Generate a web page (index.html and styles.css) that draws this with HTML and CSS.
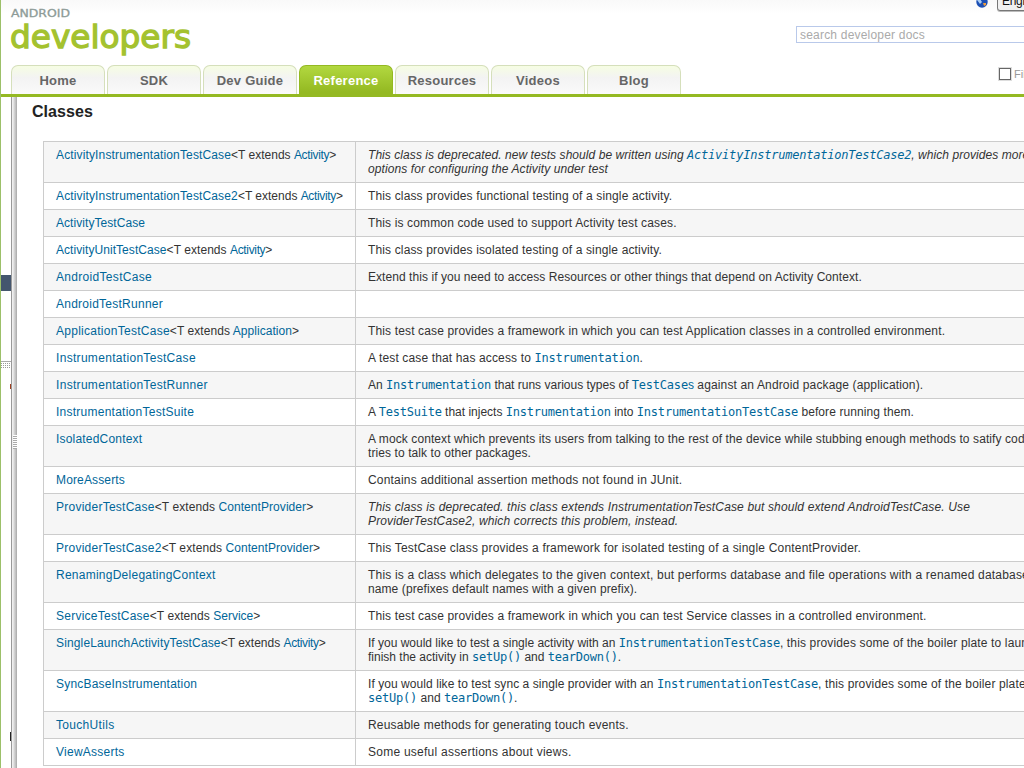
FILE: index.html
```html
<!DOCTYPE html>
<html lang="en">
<head>
<meta charset="utf-8">
<title>android.test | Android Developers</title>
<link rel="stylesheet" href="styles.css">
</head>
<body>
<div class="page">
<header class="header">
  <div class="brand">
    <svg class="logo" width="184" height="48" viewBox="0 0 184 48" role="img">
      <text class="logo-small" x="0" y="10" textLength="59" lengthAdjust="spacingAndGlyphs">ANDROID</text>
      <text class="logo-big" x="-1" y="41" textLength="181" lengthAdjust="spacingAndGlyphs">developers</text>
    </svg>
    <nav class="tabs">
      <a class="tab">Home</a><a class="tab">SDK</a><a class="tab">Dev Guide</a><a class="tab active">Reference</a><a class="tab">Resources</a><a class="tab">Videos</a><a class="tab">Blog</a>
    </nav>
  </div>
  <div class="tools">
    <div class="lang">
      <svg width="12" height="12" viewBox="0 0 12 12"><circle cx="6" cy="6" r="5.7" fill="#1c4fb4"/><path d="M1 4l3-1 2 3-2 2z" fill="#a9cdf4"/><path d="M7 7l3 0 0 2-2 1z" fill="#eb9b3c"/></svg>
      <span class="select">English</span>
    </div>
    <div class="search">search developer docs</div>
    <div class="filter"><span class="box"></span><span>Filter by API Level</span></div>
  </div>
</header>
<div class="body">
  <aside class="side">
    <div class="side-top"><div class="selected"></div></div>
    <div class="side-grip"></div>
    <div class="side-bottom"><i class="mark"></i><i class="mark dark"></i></div>
  </aside>
  <div class="splitter"><div class="grip"></div></div>
  <main class="content">
    <h2>Classes</h2>
    <table class="classes">
      <tr><td><a class="k3">ActivityInstrumentationTestCase</a><span class="k0">&lt;T extends </span><span class="tight"><a>Activity</a>&gt;</span></td><td><em><span class="k1">This class is deprecated. new tests should be written using </span><code>ActivityInstrumentationTestCase2</code><span class="k1">, which provides more</span><br>options for configuring the Activity under test</em></td></tr>
      <tr><td><a class="k3">ActivityInstrumentationTestCase2</a><span class="k0">&lt;T extends </span><span class="tight"><a>Activity</a>&gt;</span></td><td class="k3">This class provides functional testing of a single activity.</td></tr>
      <tr><td><a class="k1">ActivityTestCase</a></td><td class="k3">This is common code used to support Activity test cases.</td></tr>
      <tr><td><a class="k1">ActivityUnitTestCase</a><span class="k1">&lt;T extends </span><span class="tight"><a>Activity</a>&gt;</span></td><td class="k3">This class provides isolated testing of a single activity.</td></tr>
      <tr><td><a class="k6">AndroidTestCase</a></td><td class="k1">Extend this if you need to access Resources or other things that depend on Activity Context.</td></tr>
      <tr><td><a>AndroidTestRunner</a></td><td></td></tr>
      <tr><td><a class="k5">ApplicationTestCase</a><span class="k1">&lt;T extends </span><span class="k1"><a>Application</a>&gt;</span></td><td class="k3">This test case provides a framework in which you can test Application classes in a controlled environment.</td></tr>
      <tr><td><a class="k6">InstrumentationTestCase</a></td><td class="k3">A test case that has access to <code>Instrumentation</code>.</td></tr>
      <tr><td><a class="k6">InstrumentationTestRunner</a></td><td class="k0">An <code>Instrumentation</code> that runs various types of <code>TestCase</code><a>s</a><span class="k3"> against an Android package (application).</span></td></tr>
      <tr><td><a>InstrumentationTestSuite</a></td><td class="k0">A <code>TestSuite</code> that injects <code>Instrumentation</code> into <code>InstrumentationTestCase</code><span class="k2"> before running them.</span></td></tr>
      <tr><td><a class="k4">IsolatedContext</a></td><td class="k2">A mock context which prevents its users from talking to the rest of the device while stubbing enough methods to satify code that<br>tries to talk to other packages.</td></tr>
      <tr><td><a class="k3">MoreAsserts</a></td><td class="k4">Contains additional assertion methods not found in JUnit.</td></tr>
      <tr><td><a>ProviderTestCase</a><span class="k2">&lt;T extends </span><span class="k1"><a>ContentProvider</a>&gt;</span></td><td><em class="k3">This class is deprecated. this class extends InstrumentationTestCase but should extend AndroidTestCase. Use<br>ProviderTestCase2, which corrects this problem, instead.</em></td></tr>
      <tr><td><a>ProviderTestCase2</a><span class="k2">&lt;T extends </span><span class="k1"><a>ContentProvider</a>&gt;</span></td><td class="k4">This TestCase class provides a framework for isolated testing of a single ContentProvider.</td></tr>
      <tr><td><a>RenamingDelegatingContext</a></td><td class="k4">This is a class which delegates to the given context, but performs database and file operations with a renamed database/file<br><span class="k2">name (prefixes default names with a given prefix).</span></td></tr>
      <tr><td><a>ServiceTestCase</a><span class="k1">&lt;T extends </span><span class="k0"><a>Service</a>&gt;</span></td><td class="k3">This test case provides a framework in which you can test Service classes in a controlled environment.</td></tr>
      <tr><td><a class="k3">SingleLaunchActivityTestCase</a><span class="k0">&lt;T extends </span><span class="tight"><a>Activity</a>&gt;</span></td><td class="k0">If you would like to test a single activity with an <code>InstrumentationTestCase</code><span class="k3">, this provides some of the boiler plate to launch and</span><br>finish the activity in <code>setUp()</code> and <code>tearDown()</code>.</td></tr>
      <tr><td><a class="k4">SyncBaseInstrumentation</a></td><td class="k1">If you would like to test sync a single provider with an <code>InstrumentationTestCase</code><span class="k3">, this provides some of the boiler plate in</span><br><code>setUp()</code> and <code>tearDown()</code>.</td></tr>
      <tr><td><a class="k6">TouchUtils</a></td><td class="k4">Reusable methods for generating touch events.</td></tr>
      <tr><td><a>ViewAsserts</a></td><td>Some useful assertions about views.</td></tr>
    </table>
  </main>
</div>
</div>
</body>
</html>
```
FILE: styles.css
```css
* { box-sizing: border-box; }
body { margin: 0; background: #fff; color: #333; font: 12px/14px "Liberation Sans", Arial, sans-serif; }
.page { width: 1024px; height: 768px; overflow: hidden; border-left: 1px solid #9cc069; display: flex; flex-direction: column; }
.header { height: 97px; flex: none; display: flex; justify-content: space-between; border-bottom: 3px solid #94b922; background: linear-gradient(#f9f9f9, #fff 14px); }
.brand { display: flex; flex-direction: column; justify-content: space-between; padding: 7px 0 0 10px; }
.logo { overflow: visible; }
.logo-small { font: 11px "DejaVu Sans", sans-serif; fill: #8d9b97; stroke: #8d9b97; stroke-width: .3px; }
.logo-big { font: 32px "DejaVu Sans", sans-serif; fill: #a4c22f; stroke: #a4c22f; stroke-width: 1.3px; }
.tabs { display: flex; gap: 2px; }
.tab { width: 94px; height: 29px; border: 1px solid #d5dfbb; border-bottom: 0; border-radius: 7px 7px 0 0; background: linear-gradient(#f6fde3, #f3f3f3 12px, #fafafa); color: #666; font-weight: bold; font-size: 13px; line-height: 29px; letter-spacing: .25px; text-align: center; }
.tab.active { background: linear-gradient(#b2d840, #94b922 26px); border-color: #94b922; color: #fff; }
.tools { width: 228px; display: flex; flex-direction: column; overflow: hidden; white-space: nowrap; }
.lang { height: 26px; padding-left: 180px; display: flex; gap: 9px; align-items: flex-start; }
.lang svg { flex: none; margin-top: -4px; }
.select { flex: none; width: 80px; height: 19px; margin-top: -8px; padding: 0 4px; border: 1px solid #777; border-radius: 3px; background: #f1f1f1; box-shadow: 0 1px #bbb; color: #111; line-height: 17px; letter-spacing: -.3px; }
.search { height: 17px; width: 300px; border: 1px solid #b9c9ea; color: #aaa; padding-left: 3px; line-height: 16px; letter-spacing: .2px; }
.filter { display: flex; gap: 3px; align-items: center; margin: 24px 0 0 203px; color: #999; font-size: 11px; }
.box { flex: none; width: 12px; height: 12px; border: 1px solid #666; box-shadow: 0 0 0 1px #ddd; background: #fff; }
.body { display: flex; flex: 1; min-height: 0; }
.side { width: 10px; display: flex; flex-direction: column; }
.side-top { height: 265px; padding-top: 178px; border-bottom: 1px solid #aaa; }
.selected { height: 16px; background: #44566e; }
.side-grip { height: 5px; margin-top: 1px; background: repeating-linear-gradient(90deg, transparent 0 1px, #fff 1px 2px), repeating-linear-gradient(#999 0 1px, #fff 1px 2px); }
.side-bottom { display: flex; flex-direction: column; align-items: flex-end; padding-top: 16px; gap: 343px; }
.mark { width: 1px; height: 5px; background: #a04020; }
.dark { height: 9px; background: #222; }
.splitter { width: 6px; padding: 338px 0 0 2px; background: linear-gradient(90deg, #999 0 1px, #eee 1px 2px, #d8d8d8 3px, #bbb 5px, #a5a5a5 6px); }
.grip { height: 14px; background: repeating-linear-gradient(#fff 0 1px, #aaa 1px 2px); }
.content { flex: 1; min-width: 0; overflow: hidden; padding-left: 15px; }
h2 { margin: 6px 0 21px; font-size: 16px; line-height: 17px; letter-spacing: .05px; color: #222; }
.classes { width: 1100px; margin-left: 11px; border-collapse: collapse; table-layout: fixed; letter-spacing: .25px; }
.classes td { border: 1px solid #ccc; padding: 6px 12px; vertical-align: top; white-space: nowrap; }
.classes td:first-child { width: 312px; }
.classes tr { height: 27px; }
.classes tr:nth-child(odd) { background: #f6f6f6; }
.classes a, .classes code { color: #069; }
.classes code { font-family: "DejaVu Sans Mono", monospace; font-size: 12px; line-height: 13px; letter-spacing: -.22px; }
em { letter-spacing: .09px; }

/* tracking steps */
.tight { letter-spacing: -.35px; }
.k0 { letter-spacing: 0; }
.k1 { letter-spacing: .06px; }
.k2 { letter-spacing: .09px; }
.k3 { letter-spacing: .14px; }
.k4 { letter-spacing: .19px; }
.k5 { letter-spacing: .27px; }
.k6 { letter-spacing: .31px; }
```
